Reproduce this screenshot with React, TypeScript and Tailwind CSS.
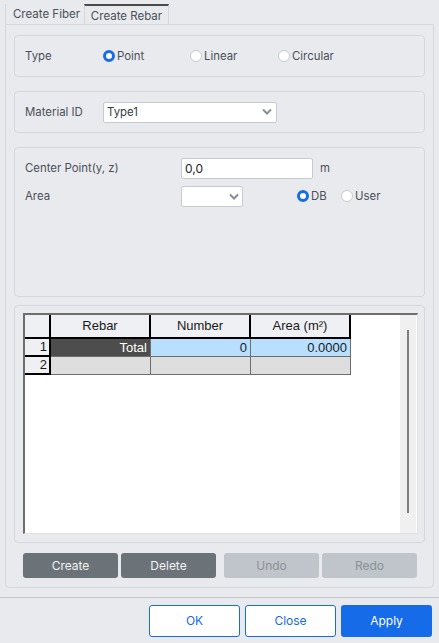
const Radio = ({ label, checked, className, textClass }: { label: string; checked?: boolean; className?: string; textClass?: string }) => (
  <div className={`flex items-center gap-[2px] ${className ?? ""}`}>
    {checked ? (
      <span className="h-[12px] w-[12px] rounded-full border-[3.5px] border-[#166be8] bg-white" />
    ) : (
      <span className="h-[12px] w-[12px] rounded-full border border-[#c6cbd1] bg-white" />
    )}
    <span className={textClass}>{label}</span>
  </div>
);

const Chevron = () => (
  <svg width="12" height="8" viewBox="0 0 12 8" fill="none" className="shrink-0">
    <path d="M2 1.5 L6 5.5 L10 1.5" stroke="#868e96" strokeWidth="2" />
  </svg>
);

const headCell = "flex items-center justify-center bg-[#eff0f4] border-r-2 border-b-2 border-black";
const rowHead = "flex items-center justify-end pr-[2px] bg-[#eff0f4] border-r-2 border-b-2 border-black";
const cell = "flex items-center justify-end pr-[3px] border-r border-b border-[#6e6e6e]";
const lowered = "leading-4";

export default function App() {
  return (
    <div className="h-[643px] w-[439px] overflow-hidden bg-[#e9eaee] text-[11.4px] text-[#495057] [font-family:Inter,'Noto_Sans',sans-serif]">
      <div className="px-[5px] pt-[4px]">
        <div className="flex h-[20px]">
          <div className="flex w-[79px] items-start justify-center border-l border-[#d4d7db] pl-[3px] pt-[3px] text-[11.5px] leading-[14px]">Create Fiber</div>
          <div className="flex w-[85px] items-center justify-center border-x border-t-2 border-[#d4d7db] border-t-[#4a4a4a] pt-[1px] text-[11.5px] leading-[14px]">Create Rebar</div>
        </div>
        <div className="h-[564px] w-[429px] rounded-b border border-[#d4d7db] px-[8px] pt-[10px]">
          <div className="flex h-[42px] items-center rounded border border-[#d4d7db] pl-[10px] pr-[8px]">
            <span className={`w-[78px] ${lowered}`}>Type</span>
            <Radio label="Point" checked className="w-[87px]" textClass={lowered} />
            <Radio label="Linear" className="w-[88px]" textClass={lowered} />
            <Radio label="Circular" textClass={lowered} />
          </div>
          <div className="mt-[14px] flex h-[42px] items-center rounded border border-[#d4d7db] pl-[10px]">
            <span className={`w-[78px] ${lowered}`}>Material ID</span>
            <div className="flex h-[21px] w-[174px] items-center justify-between rounded-[2px] border border-[#c6cbd1] bg-white pl-[3px] pr-[3px] text-[#343a40]">
              <span className={lowered}>Type1</span>
              <Chevron />
            </div>
          </div>
          <div className="mt-[14px] h-[150px] rounded border border-[#d4d7db] pl-[10px] pt-[10px]">
            <div className="flex h-[21px] items-center">
              <span className="w-[156px]">Center Point(y, z)</span>
              <div className="flex h-[21px] w-[132px] items-center rounded-[2px] border border-[#c6cbd1] bg-white pl-[3px] text-[12px] text-[#212529]">0,0</div>
              <span className="ml-[7px]">m</span>
            </div>
            <div className="mt-[7px] flex h-[21px] items-center">
              <span className="w-[156px]">Area</span>
              <div className="flex h-[21px] w-[62px] items-center justify-end rounded-[2px] border border-[#c6cbd1] bg-white pr-[2px]">
                <Chevron />
              </div>
              <Radio label="DB" checked className="ml-[54px] w-[44px]" />
              <Radio label="User" />
            </div>
          </div>
          <div className="mt-[8px] h-[238px] rounded border border-[#d4d7db] pl-[8px] pt-[7px]">
            <div className="relative h-[221px] w-[395px] border-l-2 border-t-2 border-r border-b border-[#6e6e6e] border-r-[#dfe1e5] border-b-[#dfe1e5] bg-white text-[13px] text-[#1a1a1a] [font-family:'Liberation_Sans',Arial,sans-serif]">
              <div className="grid w-[326px] grid-cols-[26px_100px_100px_100px] grid-rows-[24px_18px_18px]">
                <div className={headCell} />
                <div className={headCell}>Rebar</div>
                <div className={headCell}>Number</div>
                <div className={headCell}>Area&nbsp;(m²)</div>
                <div className={rowHead}>1</div>
                <div className={`${cell} bg-[#4d4d4d] text-white`}>Total</div>
                <div className={`${cell} bg-[#b9dffe]`}>0</div>
                <div className={`${cell} bg-[#b9dffe]`}>0.0000</div>
                <div className={rowHead}>2</div>
                <div className={`${cell} bg-[#dedede]`} />
                <div className={`${cell} bg-[#dedede]`} />
                <div className={`${cell} bg-[#dedede]`} />
              </div>
              <div className="absolute bottom-0 right-[1px] top-0 w-[16px] bg-[#f0f0f0]">
                <div className="absolute left-[7px] top-[15px] h-[183px] w-[2px] bg-[#7f7f7f]" />
              </div>
            </div>
          </div>
          <div className="mt-[10px] flex pl-[9px] text-[12px]">
            <button className="h-[25px] w-[95px] rounded-[3px] bg-[#6b7278] text-[#f1f3f5]">Create</button>
            <button className="ml-[3px] h-[25px] w-[95px] rounded-[3px] bg-[#6b7278] text-[#f1f3f5]">Delete</button>
            <button className="ml-[8px] h-[25px] w-[95px] rounded-[3px] bg-[#bfc5ca] text-[#8b9196]">Undo</button>
            <button className="ml-[3px] h-[25px] w-[95px] rounded-[3px] bg-[#bfc5ca] text-[#8b9196]">Redo</button>
          </div>
        </div>
      </div>
      <div className="mt-[9px] flex justify-end border-t border-[#c6c8cc] pr-[7px] pt-[7px] text-[12px]">
        <button className="h-[32px] w-[91px] rounded-[3px] border border-[#166be8] bg-white text-[#166be8]">OK</button>
        <button className="ml-[5px] h-[32px] w-[91px] rounded-[3px] border border-[#166be8] bg-white text-[#166be8]">Close</button>
        <button className="ml-[5px] h-[32px] w-[91px] rounded-[3px] bg-[#166be8] text-white">Apply</button>
      </div>
    </div>
  );
}
